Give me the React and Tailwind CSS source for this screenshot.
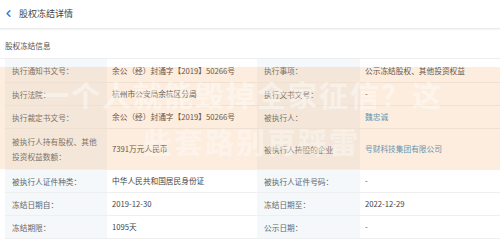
import { ChevronLeft } from "lucide-react";

const rows = [
  {
    h: "h-[24px]",
    cells: [
      { label: "执行通知书文号：", value: "余公（经）封通字【2019】50266号" },
      { label: "执行事项：", value: "公示冻结股权、其他投资权益" },
    ],
  },
  {
    h: "h-[23px]",
    cells: [
      { label: "执行法院：", value: "杭州市公安局余杭区分局" },
      { label: "执行文书文号：", value: "-" },
    ],
  },
  {
    h: "h-[23px]",
    cells: [
      { label: "执行裁定书文号：", value: "余公（经）封通字【2019】50266号" },
      { label: "被执行人：", value: "魏忠诚", link: true },
    ],
  },
  {
    h: "h-[41px]",
    cells: [
      { label: "被执行人持有股权、其他投资权益数额：", value: "7391万元人民币" },
      { label: "被执行人持股的企业", value: "号财科技集团有限公司", link: true },
    ],
  },
  {
    h: "h-[23px]",
    cells: [
      { label: "被执行人证件种类：", value: "中华人民共和国居民身份证" },
      { label: "被执行人证件号码：", value: "-" },
    ],
  },
  {
    h: "h-[23px]",
    cells: [
      { label: "冻结日期自：", value: "2019-12-30" },
      { label: "冻结日期至：", value: "2022-12-29" },
    ],
  },
  {
    h: "h-[23px]",
    cells: [
      { label: "冻结期限：", value: "1095天" },
      { label: "公示日期：", value: "-" },
    ],
  },
];

export default function App() {
  return (
    <div
      className="relative w-[500px] h-[246px] overflow-hidden bg-white text-[#333]"
      style={{ fontFamily: '"Noto Sans CJK SC", "Noto Sans", sans-serif' }}
    >
      {/* Header */}
      <div className="h-[29px] flex items-center gap-[5px] pl-[3px] pb-[1px] border-b border-[#ececec] shadow-[0_1px_1px_rgba(0,0,0,0.04)]">
        <ChevronLeft className="w-[11px] h-[11px] text-[#2f7fd8]" strokeWidth={3.4} />
        <span className="text-[9px] text-[#444]">股权冻结详情</span>
      </div>

      {/* Section title */}
      <div className="h-[30px] flex items-center pl-[5px] pt-[4px] border-b border-[#eeeeee]">
        <span className="text-[7.6px] text-[#555]">股权冻结信息</span>
      </div>

      {/* Table */}
      <div className="pl-[5px]">
        {rows.map((row, i) => (
          <div
            key={i}
            className={`grid grid-cols-[102px_150px_103px_1fr] border-b border-[#efefef] ${row.h}`}
          >
            {row.cells.map((c, j) => (
              <div key={j} className="contents">
                <div className="flex items-center pl-[7px] pr-[6px] bg-[#f4f8fb] text-[7.7px] leading-[15px] text-[#666]">
                  {c.label}
                </div>
                <div
                  className={`flex items-center pl-[5px] text-[7.7px] ${
                    c.link ? "text-[#3b8fc9]" : "text-[#444]"
                  }`}
                >
                  {c.value}
                </div>
              </div>
            ))}
          </div>
        ))}
      </div>

      {/* Watermark overlay */}
      <div className="absolute left-0 right-0 top-[67px] h-[102px] bg-[#f7a35c]/20 pointer-events-none">
        <div className="absolute left-[40px] top-[6px] text-[29px] font-bold text-white/45 tracking-[2px] whitespace-nowrap">
          一个人就能毁掉全家征信？这
        </div>
        <div className="absolute left-[143px] top-[53px] text-[29px] font-bold text-white/40 tracking-[2px] whitespace-nowrap">
          些套路别再踩雷
        </div>
      </div>
    </div>
  );
}
